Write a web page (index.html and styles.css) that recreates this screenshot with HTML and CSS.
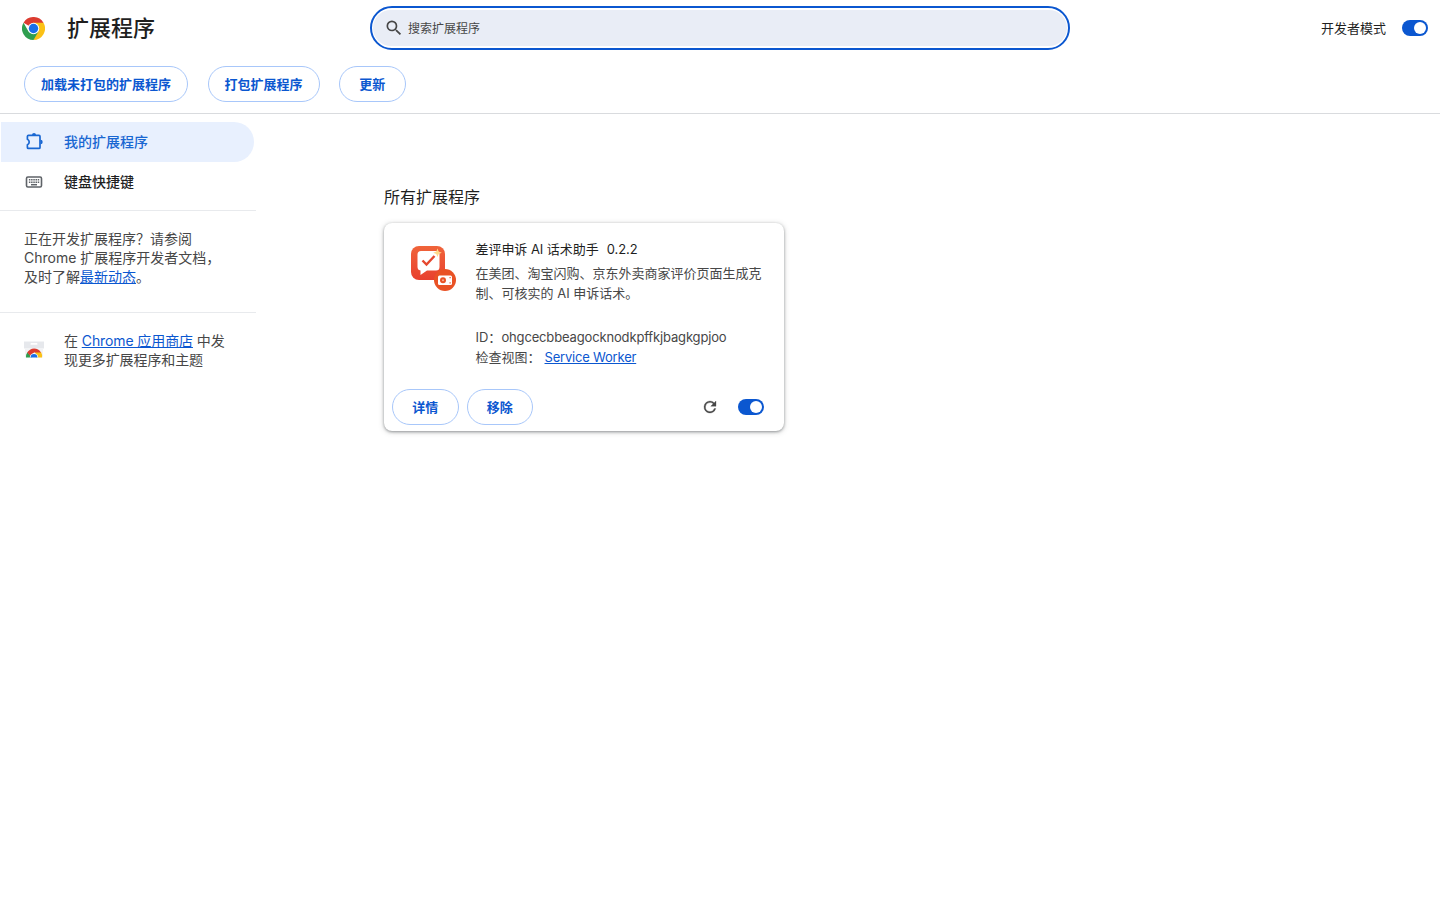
FILE: index.html
```html
<!DOCTYPE html>
<html lang="zh-CN">

<head>
	<meta charset="UTF-8">
	<meta name="viewport" content="width=device-width, initial-scale=1.0">
	<title>扩展程序</title>
	<link rel="stylesheet" href="styles.css">
</head>

<body>
	<header class="toolbar">
		<div class="brand">
			<svg class="brand-logo" viewBox="0 0 48 48">
				<path fill="#dc3c30" d="M24 24 L3.2 12 A24 24 0 0 1 44.8 12 Z" />
				<path fill="#fbc116" d="M24 24 L24 12 L44.8 12 A24 24 0 0 1 24 48 Z" />
				<path fill="#2f9e4f" d="M24 24 L24 48 A24 24 0 0 1 3.2 12 L13.6 30 Z" />
				<path fill="#2f9e4f" d="M13.6 30 L34.4 30 L24 48 Z" />
				<circle cx="24" cy="24" r="12" fill="#fff" />
				<circle cx="24" cy="24" r="9.8" fill="#1a6fe8" />
			</svg>
			<h1>扩展程序</h1>
		</div>
		<div class="search">
			<div class="search-field">
				<svg class="search-icon" viewBox="0 0 24 24">
					<path d="M15.5 14h-.79l-.28-.27A6.471 6.471 0 0 0 16 9.5 6.5 6.5 0 1 0 9.5 16c1.61 0 3.09-.59 4.23-1.57l.27.28v.79l5 4.99L20.49 19l-4.99-5zm-6 0C7.01 14 5 11.99 5 9.5S7.01 5 9.5 5 14 7.01 14 9.5 11.99 14 9.5 14z" />
				</svg>
				<span>搜索扩展程序</span>
			</div>
		</div>
		<div class="dev-mode">
			<span class="dev-label">开发者模式</span>
			<span class="toggle"></span>
		</div>
	</header>

	<!-- Herramientas de desarrollador -->
	<div class="dev-buttons">
		<button class="btn">加载未打包的扩展程序</button>
		<button class="btn">打包扩展程序</button>
		<button class="btn">更新</button>
	</div>

	<div class="layout">
		<nav class="sidebar">
			<a class="menu-item selected">
				<svg class="menu-icon" viewBox="0 0 20 20">
					<path fill="none" stroke="currentColor" stroke-width="1.7" stroke-linejoin="round" d="M4.400 3.400h10.600q1 0 1 1v11q0 1-1 1H4.400q-1 0-1-1v-2.700a3 3 0 0 0 0-5.500V4.400q0-1 1-1z" />
					<path fill="currentColor" d="M8 3a2 2 0 0 1 4 0zM16.500 7.800a2.200 2.200 0 0 1 0 4.400z" />
				</svg>
				<span>我的扩展程序</span>
			</a>
			<a class="menu-item">
				<svg class="menu-icon" viewBox="0 0 20 20">
					<rect x="2.500" y="5" width="15" height="10" rx="1.400" fill="none" stroke="currentColor" stroke-width="1.600" />
					<path stroke="currentColor" stroke-width="1.500" stroke-dasharray="1.500 .7" d="M4.900 7.800h10.500M4.900 10.200h10.500" />
					<path stroke="currentColor" stroke-width="1.500" d="M7 12.700h6" />
				</svg>
				<span>键盘快捷键</span>
			</a>
			<p class="docs">正在开发扩展程序？请参阅<br>Chrome 扩展程序开发者文档，<br>及时了解<a href="#">最新动态</a>。</p>
			<div class="store">
				<svg class="store-icon" viewBox="0 0 20 20">
					<path fill="#e6e8ec" d="M0 1.500h20v7H0z" />
					<path fill="#f2f3f5" d="M1 8h18v9.500H1z" />
					<rect x="6.500" y="3" width="7" height="1.800" rx=".9" fill="#fff" />
					<path fill="#2f9e4f" d="M2 17.500a8 8 0 0 1 1.400-5.200L8 17.500z" />
					<path fill="#fbc116" d="M11 12h6a8 8 0 0 1 1 5.500h-6z" />
					<path fill="#dc3c30" d="M3.200 12.600A8 8 0 0 1 17 12.400h-7l-3.500 3.800z" />
					<path fill="#fff" d="M5.800 17.500a4.200 4.200 0 0 1 8.400 0z" />
					<path fill="#1a6fe8" d="M6.600 17.500a3.400 3.400 0 0 1 6.800 0z" />
				</svg>
				<p>在 <a href="#">Chrome 应用商店</a> 中发现更多扩展程序和主题</p>
			</div>
		</nav>

		<main class="content">
			<h2>所有扩展程序</h2>
			<div class="card">
				<div class="card-main">
					<svg class="card-icon" viewBox="0 0 48 48">
						<defs>
							<linearGradient id="orange" x1="0" y1="0" x2="0" y2="1">
								<stop offset="0" stop-color="#f0643a" />
								<stop offset="1" stop-color="#e8402e" />
							</linearGradient>
						</defs>
						<rect x="1" y="1" width="34" height="34" rx="8" fill="url(#orange)" />
						<path fill="#fff" d="M11 6h15q3.500 0 3.500 3.500v12.500q0 3.500-3.500 3.500H17l-6.500 4.500v-4.500Q7.500 25 7.500 22V9.500Q7.500 6 11 6z" />
						<path fill="none" stroke="#e5482f" stroke-width="2.400" d="M12.500 15.500l4 4 8-8.500" />
						<path fill="#ffd98a" d="M27.500 3.500l1.200 3.100 3.100 1.200-3.100 1.200-1.200 3.100-1.200-3.100-3.100-1.200 3.100-1.200z" />
						<circle cx="35" cy="35" r="11" fill="#e95225" />
						<rect x="28" y="30.500" width="14" height="9.500" rx="1.500" fill="#fff" />
						<circle cx="33" cy="35.200" r="3" fill="#e95225" />
						<circle cx="33" cy="35.200" r="1" fill="#f8b49a" />
						<path fill="#e95225" d="M39.500 32h1.200v1.200h-1.200zM39.500 37.300h1.200v1.200h-1.200z" />
					</svg>
					<div class="card-text">
						<div class="card-title"><span>差评申诉 AI 话术助手</span><span>0.2.2</span></div>
						<p class="card-desc">在美团、淘宝闪购、京东外卖商家评价页面生成克制、可核实的 AI 申诉话术。</p>
						<div class="card-info">ID：<span class="card-id">ohgcecbbeagocknodkpffkjbagkgpjoo</span></div>
						<div class="card-info">检查视图：<a class="worker" href="#">Service Worker</a></div>
					</div>
				</div>
				<div class="card-actions">
					<button class="btn">详情</button>
					<button class="btn">移除</button>
					<svg class="reload" viewBox="0 0 24 24">
						<path d="M17.650 6.350A7.960 7.960 0 0 0 12 4a8 8 0 1 0 7.730 10h-2.080A6 6 0 1 1 12 6c1.660 0 3.140.690 4.220 1.780L13 11h7V4l-2.350 2.350z" />
					</svg>
					<span class="toggle"></span>
				</div>
			</div>
		</main>
	</div>
</body>

</html>
```

FILE: styles.css
```css
* {
	box-sizing: border-box;
}

body {
	margin: 0;
	min-height: 100vh;
	background: #fff;
	color: #1f1f1f;
	font-family: Inter, "Noto Sans CJK SC", sans-serif;
	font-size: 13px;
}

h1,
h2,
p {
	margin: 0;
	font-weight: 400;
}

a {
	color: #0b57d0;
}

/* Barra superior */
.toolbar {
	display: grid;
	grid-template-columns: 1fr 700px 1fr;
	align-items: center;
	height: 56px;
}

.brand {
	display: flex;
	align-items: center;
	gap: 22px;
	padding-left: 22px;
}

.brand-logo {
	width: 23px;
	height: 23px;
}

h1 {
	font-size: 22px;
	font-weight: 500;
	line-height: 32px;
}

.search {
	height: 44px;
	padding: 2px 1px;
	border: 2px solid #0b57d0;
	border-radius: 22px;
}

.search-field {
	display: flex;
	align-items: center;
	height: 100%;
	padding-left: 11px;
	border-radius: 18px;
	background: #e9edf6;
	color: #474747;
	font-size: 12px;
}

.search-field span,
.dev-label,
.menu-item span {
	padding-bottom: 2px;
}

.search-icon {
	width: 20px;
	height: 20px;
	margin-right: 4px;
	fill: #474747;
}

.dev-mode {
	display: flex;
	align-items: center;
	justify-content: flex-end;
	gap: 16px;
	padding-right: 12px;
}

.toggle {
	display: flex;
	justify-content: flex-end;
	width: 26px;
	height: 16px;
	padding: 2px;
	border-radius: 8px;
	background: #0b57d0;
}

.toggle::after {
	content: "";
	width: 12px;
	height: 12px;
	border-radius: 50%;
	background: #fff;
}

.dev-buttons {
	display: flex;
	gap: 19.5px;
	height: 58px;
	padding: 10px 24px 0;
	border-bottom: 1px solid #d9dbde;
}

.btn {
	height: 36px;
	padding: 0 16px 2px;
	border: 1px solid #a8c7fa;
	border-radius: 18px;
	min-width: 66.5px;
	background: #fff;
	color: #0b57d0;
	font-family: inherit;
	font-size: 13px;
	font-weight: 700;
}

.layout {
	display: flex;
}

/* Menú lateral */
.sidebar {
	width: 256px;
	padding-top: 8px;
}

.menu-item {
	display: flex;
	align-items: center;
	gap: 20px;
	width: 253px;
	height: 40px;
	margin-left: 1px;
	padding-left: 23px;
	border-radius: 0 20px 20px 0;
	color: #1f1f1f;
	font-size: 14px;
	font-weight: 500;
}

.menu-icon {
	width: 20px;
	height: 20px;
	color: #5f6368;
}

.selected,
.selected .menu-icon {
	color: #1967d2;
}

.selected {
	background: #e8f0fe;
}

.docs,
.store {
	border-top: 1px solid #e8eaed;
	color: #474747;
	font-size: 14px;
	line-height: 19px;
}

.docs {
	height: 102px;
	margin-top: 8px;
	padding: 18px 20px 0 24px;
}

.store {
	display: flex;
	align-items: center;
	gap: 20px;
	padding: 18px 24px 0;
	letter-spacing: -0.1px;
}

.store-icon {
	flex: none;
	width: 20px;
	height: 20px;
}

/* Lista de extensiones */
.content {
	padding: 71px 0 0 128px;
}

h2 {
	font-size: 16px;
	line-height: 24px;
}

.card {
	display: flex;
	flex-direction: column;
	width: 400px;
	height: 208px;
	margin-top: 14px;
	border-radius: 8px;
	box-shadow: 0 1px 3px rgba(60, 64, 67, 0.5), 0 1px 6px rgba(60, 64, 67, 0.18);
}

.card-main {
	display: flex;
	flex: 1;
	gap: 17.5px;
	padding: 16px 20px 0 26px;
}

.card-icon {
	flex: none;
	width: 48px;
	height: 48px;
	margin-top: 6px;
}

.card-text {
	color: #474747;
	line-height: 20px;
}

.card-title {
	display: flex;
	gap: 8px;
	margin-bottom: 4px;
	color: #1f1f1f;
	letter-spacing: -0.05px;
}

.card-desc {
	height: 64px;
}

.card-id {
	letter-spacing: -0.15px;
}

.worker {
	margin-left: 4px;
	letter-spacing: -0.2px;
}

.card-actions {
	display: flex;
	align-items: center;
	gap: 8px;
	height: 48px;
	padding: 0 20px 0 8px;
}

.reload {
	width: 18px;
	height: 18px;
	margin-left: auto;
	margin-right: 11px;
	fill: #474747;
	stroke: #474747;
	stroke-width: 0.4;
}
```
